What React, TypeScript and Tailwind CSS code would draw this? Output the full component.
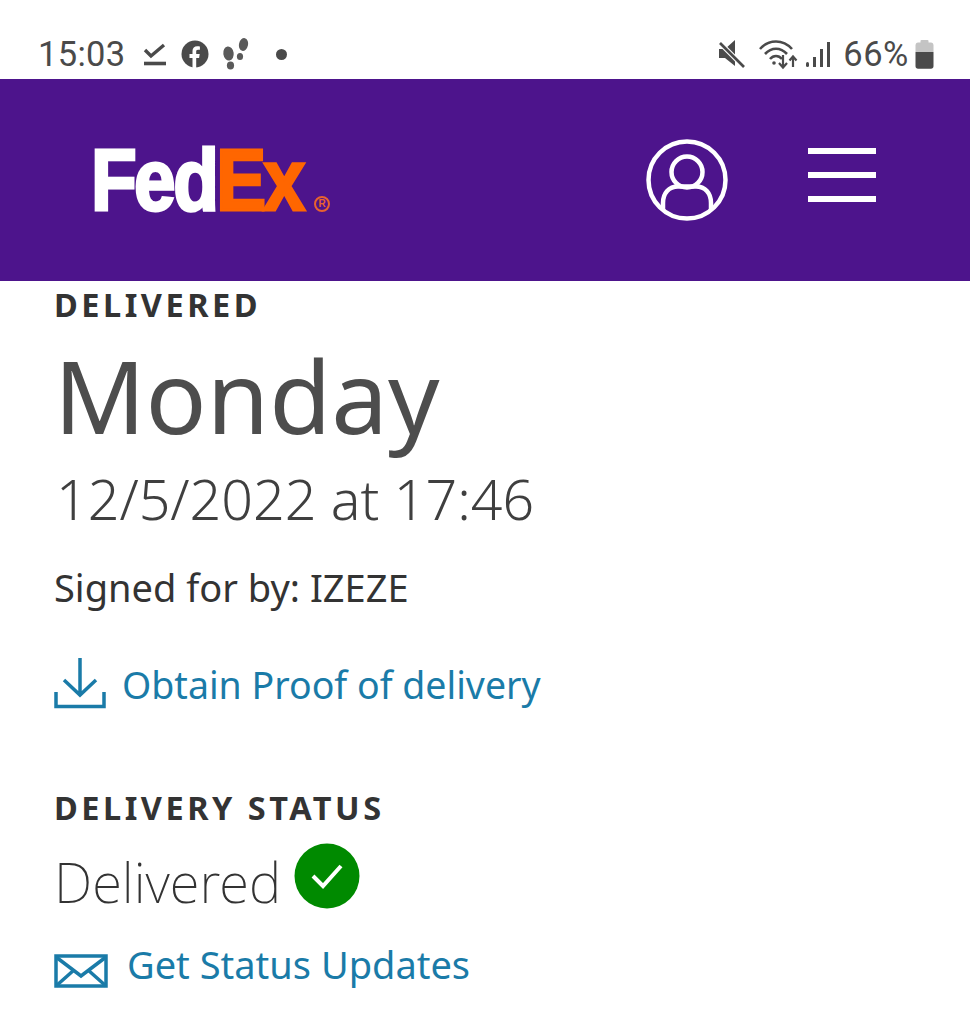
import React from "react";

const sans = "font-['Noto_Sans','Open_Sans',sans-serif]";

function StatusLeft() {
  return (
    <div className="flex items-center">
      <span className="font-['Roboto',sans-serif] text-[34.5px] leading-none text-[#4a4a4a] tracking-[0.3px]">15:03</span>
      <svg className="ml-[18px]" width="24" height="27" viewBox="0 0 24 27" fill="none" stroke="#4a4a4a">
        <path d="M2 9 L8 15 L21 4" strokeWidth="3.4" />
        <path d="M1 22.5 H23" strokeWidth="3.6" />
      </svg>
      <svg className="ml-[14px]" width="28" height="28" viewBox="0 0 28 28">
        <circle cx="14" cy="14" r="13.5" fill="#4a4a4a" />
        <path d="M11.5 28V18H8.5V14H11.5V11C11.5 7.8 13.4 6.2 16.2 6.2C17.5 6.2 18.6 6.4 18.9 6.4V9.8H17C15.6 9.8 15.2 10.5 15.2 11.6V14H18.7L18.1 18H15.2V28Z" fill="#fff" />
      </svg>
      <svg className="ml-[13px]" width="28" height="32" viewBox="0 0 28 32" fill="#5a5a5a">
        <ellipse cx="6.500" cy="15.500" rx="5.200" ry="7" transform="rotate(-8 6.500 15.500)" />
        <ellipse cx="8.500" cy="27.500" rx="3.600" ry="4" />
        <ellipse cx="21.500" cy="6.500" rx="4.500" ry="6.500" transform="rotate(12 21.500 6.500)" />
        <ellipse cx="18" cy="18.500" rx="3.100" ry="3.500" />
      </svg>
      <span className="ml-[26px] h-[11px] w-[11px] rounded-full bg-[#4a4a4a]" />
    </div>
  );
}

function StatusRight() {
  return (
    <div className="flex items-center">
      <svg width="28" height="30" viewBox="0 0 28 30">
        <path d="M1 10H7L17 1V27L7 19H1Z" fill="#4a4a4a" />
        <path d="M2 4L26 28" stroke="#fff" strokeWidth="5" />
        <path d="M2 4L26 28" stroke="#4a4a4a" strokeWidth="2.6" />
      </svg>
      <svg className="ml-[12px]" width="40" height="32" viewBox="0 0 40 32" fill="none" stroke="#4a4a4a" strokeWidth="2.6">
        <path d="M2 11C11 1 25 1 34 11" />
        <path d="M7 16C13.500 9 22.500 9 29 16" />
        <path d="M12 21C15.500 17 20.500 17 24 21" />
        <circle cx="16" cy="25" r="1.800" fill="#4a4a4a" stroke="none" />
        <path d="M25 17V29M21 25L25 29.500L29 25" strokeWidth="2.200" />
        <path d="M35 29V19M31.500 22.500L35 18.500L38.500 22.500" strokeWidth="2.200" />
      </svg>
      <svg className="ml-[7px]" width="26" height="28" viewBox="0 0 26 28" fill="#4a4a4a">
        <rect x="1" y="22" width="3" height="5" rx="1.500" />
        <rect x="8" y="17" width="3" height="10" />
        <rect x="15" y="9" width="3" height="18" />
        <rect x="22" y="2" width="3" height="25" />
      </svg>
      <span className="ml-[12px] font-['Roboto',sans-serif] text-[34.5px] leading-none text-[#4a4a4a] tracking-[0.6px]">66%</span>
      <svg className="ml-[6px]" width="19" height="29" viewBox="0 0 19 29">
        <rect x="5.500" y="0" width="8" height="4" rx="1" fill="#c4c4c4" />
        <path d="M0.500 5.500C0.500 3.500 1.500 2.500 3 2.500H16C17.500 2.500 18.500 3.500 18.500 5.500V12H0.500Z" fill="#c4c4c4" />
        <path d="M0.500 12H18.500V26C18.500 27.800 17.500 28.800 16 28.800H3C1.500 28.800 0.500 27.800 0.500 26Z" fill="#4a4a4a" />
      </svg>
    </div>
  );
}

function FedExLogo() {
  return (
    <div className="flex w-[239px] items-end select-none">
      <div className="w-[212px] shrink-0 origin-left scale-x-[0.86] whitespace-nowrap font-['Liberation_Sans',sans-serif] text-[87px] font-bold leading-[66px] tracking-[-3px]">
        <span className="text-white [-webkit-text-stroke:3px_#ffffff]">Fed</span>
        <span className="text-[#ff6600] [-webkit-text-stroke:3px_#ff6600]">Ex</span>
      </div>
      <span className="ml-[11px] mb-[1px] flex h-[16px] w-[16px] shrink-0 items-center justify-center rounded-full border-2 border-[#e8622f] font-['Liberation_Sans',sans-serif] text-[10px] font-bold leading-none text-[#e8622f]">R</span>
    </div>
  );
}

export default function App() {
  return (
    <div className={`${sans} min-h-[1024px] w-[970px] overflow-hidden bg-white`}>
      <div className="flex h-[79px] items-center justify-between pl-[38px] pr-[36px] pt-[29px]">
        <StatusLeft />
        <StatusRight />
      </div>

      <header className="flex h-[202px] items-center justify-between bg-[#4d148c] pl-[91px] pr-[94px]">
        <FedExLogo />
        <div className="flex items-center gap-[80px]">
          <svg width="82" height="82" viewBox="0 0 82 82" fill="none" stroke="#fff" strokeWidth="4.500">
            <circle cx="41" cy="41" r="38.500" />
            <circle cx="41" cy="33" r="15.500" />
            <path d="M17 71V64C17 54 23 47.500 32 47.500H50C59 47.500 65 54 65 64V71" />
          </svg>
          <div className="mb-[10px] flex w-[68px] flex-col gap-[18px]">
            <div className="h-[6px] bg-white" />
            <div className="h-[6px] bg-white" />
            <div className="h-[6px] bg-white" />
          </div>
        </div>
      </header>

      <main className="pl-[54px]">
        <div className="mt-[6px] text-[32.500px] font-bold leading-[36px] tracking-[3.5px] text-[#333333]">DELIVERED</div>
        <div className="mt-[16px] text-[101px] font-normal leading-[112px] text-[#4d4d4d]">Monday</div>
        <div className="mt-[16px] ml-[2px] text-[55.5px] font-light leading-[64px] text-[#3f3f3f]">12/5/2022 at 17:46</div>
        <div className="mt-[33px] text-[38px] leading-[46px] text-[#333333]">Signed for by: IZEZE</div>
        <div className="mt-[51px] flex items-center">
          <svg className="-mt-[4px]" width="52" height="52" viewBox="0 0 52 52" fill="none" stroke="#1a7ba8" strokeWidth="3.500">
            <path d="M26 1V38M10 23L26 38L42 23" />
            <path d="M2 35V49.500H50V35" />
          </svg>
          <span className="ml-[16px] text-[37.500px] leading-[48px] text-[#1a7ba8]">Obtain Proof of delivery</span>
        </div>
        <div className="mt-[81px] text-[32.500px] font-bold leading-[36px] tracking-[3.5px] text-[#333333]">DELIVERY STATUS</div>
        <div className="mt-[20px] flex items-start">
          <span className="text-[54.500px] font-extralight leading-[72px] text-[#333333]">Delivered</span>
          <svg className="ml-[13px] -mt-[3px]" width="66" height="66" viewBox="0 0 66 66" fill="none">
            <circle cx="33" cy="33" r="32.500" fill="#008a00" />
            <path d="M19 33L29 43L47 23" stroke="#fff" strokeWidth="4" />
          </svg>
        </div>
        <div className="mt-[22px] flex items-center">
          <svg className="mt-[14px]" width="54" height="34" viewBox="0 0 54 34" fill="none" stroke="#1a7ba8" strokeWidth="3.500">
            <rect x="2" y="2" width="50" height="30" />
            <path d="M2 3L27 22L52 3M2 32L20 16M52 32L34 16" />
          </svg>
          <span className="ml-[19px] text-[38px] leading-[48px] text-[#1a7ba8]">Get Status Updates</span>
        </div>
      </main>
    </div>
  );
}
